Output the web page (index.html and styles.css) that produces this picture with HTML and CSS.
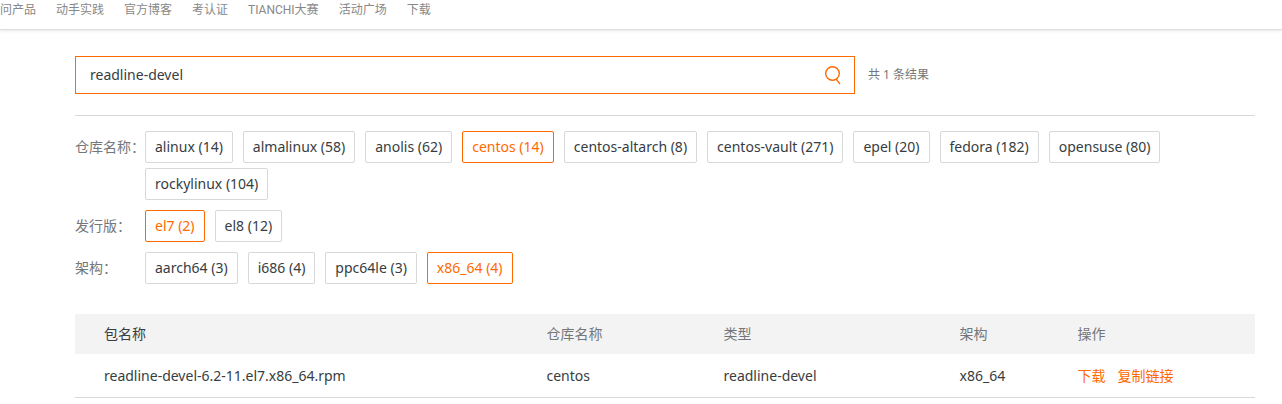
FILE: index.html
```
<!DOCTYPE html>
<html lang="zh-CN">
<head>
    <meta charset="UTF-8">
    <title>readline-devel</title>
    <meta name="viewport" content="width=device-width, initial-scale=1">
    <link rel="stylesheet" href="styles.css">
</head>
<body>
    <header class="top-bar">
        <nav class="top-nav">
            <a href="#">问产品</a>
            <a href="#">动手实践</a>
            <a href="#">官方博客</a>
            <a href="#">考认证</a>
            <a href="#">TIANCHI大赛</a>
            <a href="#">活动广场</a>
            <a href="#">下载</a>
        </nav>
    </header>

    <main class="content">
        <form class="search">
            <div class="search-box">
                <input type="text" name="q" value="readline-devel" aria-label="搜索">
                <button type="submit" aria-label="搜索">
                    <svg width="18" height="20" viewBox="0 0 18 20" fill="none" stroke="currentColor" stroke-width="1.4">
                        <circle cx="8.5" cy="8.5" r="6.8"/>
                        <path d="M12.2 14.2 16 19.2"/>
                    </svg>
                </button>
            </div>
            <span class="search-count">共 1 条结果</span>
        </form>

        <section class="filters">
            <div class="filter">
                <span class="filter-label" id="repoLabel">仓库名称：</span>
                <div class="filter-tags" role="group" aria-labelledby="repoLabel">
                    <button type="button" class="tag">alinux (14)</button>
                    <button type="button" class="tag">almalinux (58)</button>
                    <button type="button" class="tag">anolis (62)</button>
                    <button type="button" class="tag active">centos (14)</button>
                    <button type="button" class="tag">centos-altarch (8)</button>
                    <button type="button" class="tag">centos-vault (271)</button>
                    <button type="button" class="tag">epel (20)</button>
                    <button type="button" class="tag">fedora (182)</button>
                    <button type="button" class="tag">opensuse (80)</button>
                    <button type="button" class="tag">rockylinux (104)</button>
                </div>
            </div>
            <div class="filter">
                <span class="filter-label" id="releaseLabel">发行版：</span>
                <div class="filter-tags" role="group" aria-labelledby="releaseLabel">
                    <button type="button" class="tag active">el7 (2)</button>
                    <button type="button" class="tag">el8 (12)</button>
                </div>
            </div>
            <div class="filter">
                <span class="filter-label" id="archLabel">架构：</span>
                <div class="filter-tags" role="group" aria-labelledby="archLabel">
                    <button type="button" class="tag">aarch64 (3)</button>
                    <button type="button" class="tag">i686 (4)</button>
                    <button type="button" class="tag">ppc64le (3)</button>
                    <button type="button" class="tag active">x86_64 (4)</button>
                </div>
            </div>
        </section>

        <table class="packages">
            <thead>
                <tr>
                    <th class="col-name">包名称</th>
                    <th class="col-repo">仓库名称</th>
                    <th class="col-type">类型</th>
                    <th class="col-arch">架构</th>
                    <th>操作</th>
                </tr>
            </thead>
            <tbody>
                <tr>
                    <td>readline-devel-6.2-11.el7.x86_64.rpm</td>
                    <td>centos</td>
                    <td>readline-devel</td>
                    <td>x86_64</td>
                    <td>
                        <div class="actions">
                            <a href="#">下载</a>
                            <a href="#">复制链接</a>
                        </div>
                    </td>
                </tr>
            </tbody>
        </table>
    </main>
</body>
</html>
```
FILE: styles.css
```
* { box-sizing: border-box; }
body { margin: 0; background: #fff; color: #373d41; font: 14px/20px "Noto Sans", "Noto Sans CJK SC", sans-serif; }
a { text-decoration: none; }
button, input { font: inherit; color: inherit; }

.top-bar { border-bottom: 1px solid #dcdfdf; box-shadow: 0 1px 3px rgba(0, 0, 0, 0.1); }
.top-nav { display: flex; gap: 20px; height: 29px; font: 12px/20px Roboto, "Noto Sans CJK SC", sans-serif; }
.top-nav a { color: #888; white-space: nowrap; }

.content { padding: 26px 27px 0 75px; }

.search { display: flex; align-items: center; gap: 13px; padding-bottom: 21px; border-bottom: 1px solid #d7d8d9; }
.search-box { display: flex; flex: 0 1 780px; height: 38px; border: 1px solid #ff6a00; }
.search-box input { flex: 1; min-width: 0; padding: 0 14px; border: none; outline: none; background: none; }
.search-box button { display: flex; align-items: center; padding: 0 12px; border: none; background: none; color: #ff6a00; cursor: pointer; }
.search-count { color: #73777a; font-size: 12px; white-space: nowrap; }

.filters { display: flex; flex-direction: column; gap: 10px; padding: 15px 0 30px; }
.filter { display: flex; }
.filter-label { flex: 0 0 70px; line-height: 32px; color: #73777a; white-space: nowrap; }
.filter-tags { display: flex; flex-wrap: wrap; gap: 5px 10px; }
.tag { height: 32px; padding: 0 9px; border: 1px solid #d7d8d9; border-radius: 2px; background: #fff; cursor: pointer; }
.tag.active { border-color: #ff6a00; color: #ff6a00; }

.packages { width: 100%; border-collapse: collapse; table-layout: fixed; }
.packages th, .packages td { padding: 0 0 0 29px; text-align: left; font-weight: normal; }
.packages th { height: 40px; background: #f3f3f3; color: #73777a; }
.packages td { height: 43px; padding-top: 2px; border-bottom: 1px solid #d7d8d9; }
.packages .col-name { width: 37.5%; color: #373d41; }
.col-repo { width: 15%; }
.col-type { width: 20%; }
.col-arch { width: 10%; }
.actions { display: flex; gap: 12px; }
.actions a { color: #ff6a00; }
```
